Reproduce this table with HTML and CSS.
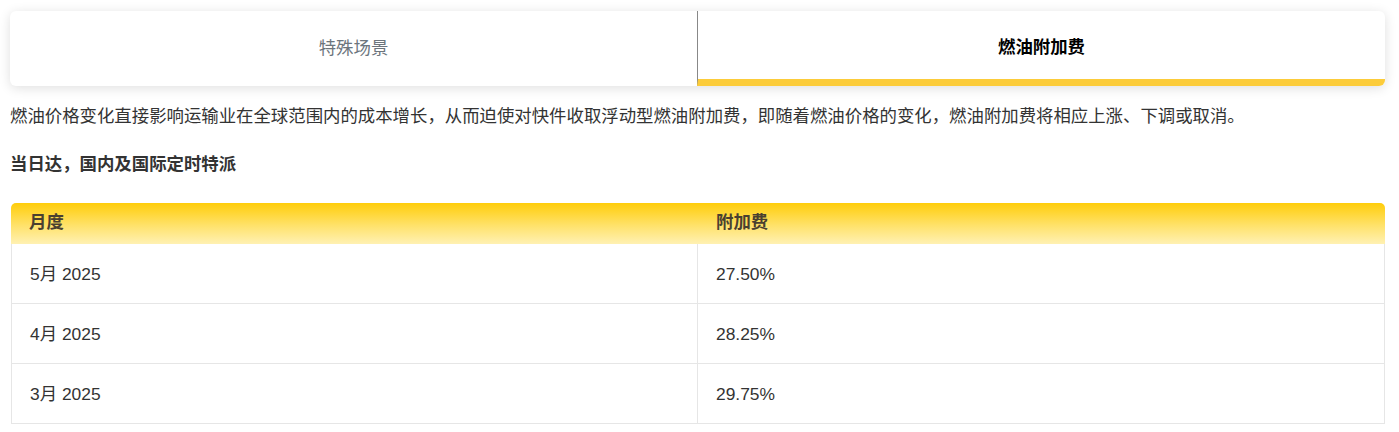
FILE: index.html
```html
<!DOCTYPE html>
<html lang="zh-CN">
<head>
<meta charset="utf-8">
<title>燃油附加费</title>
<link rel="stylesheet" href="styles.css">
</head>
<body>
<div class="page">
  <div class="tabs">
    <div class="tab">特殊场景</div>
    <div class="tab active">燃油附加费</div>
  </div>
  <p class="intro">燃油价格变化直接影响运输业在全球范围内的成本增长，从而迫使对快件收取浮动型燃油附加费，即随着燃油价格的变化，燃油附加费将相应上涨、下调或取消。</p>
  <p class="subtitle">当日达，国内及国际定时特派</p>
  <table class="fuel">
    <thead>
      <tr><th>月度</th><th>附加费</th></tr>
    </thead>
    <tbody>
      <tr><td>5月 2025</td><td>27.50%</td></tr>
      <tr><td>4月 2025</td><td>28.25%</td></tr>
      <tr><td>3月 2025</td><td>29.75%</td></tr>
    </tbody>
  </table>
</div>
</body>
</html>
```
FILE: styles.css
```css
* { box-sizing: border-box; }
html, body { margin: 0; padding: 0; background: #fff; }
body {
  font-family: "Liberation Sans", "Noto Sans CJK SC", sans-serif;
  font-size: 17.4px;
  color: #333;
}
.page {
  padding: 11px 14px 0 10px;
}
.tabs {
  display: flex;
  height: 75px;
  background: #fff;
  border-radius: 6px;
  box-shadow: 0 2px 12px rgba(0,0,0,0.13);
  overflow: hidden;
}
.tab {
  flex: 1;
  display: flex;
  align-items: center;
  justify-content: center;
  color: #6c757d;
  padding-bottom: 4px;
}
.tab.active {
  color: #000;
  font-weight: bold;
  border-left: 1px solid #888;
  border-bottom: 7px solid #fccc3a;
  padding-bottom: 0;
  padding-top: 1px;
}
.intro {
  margin: 18px 0 0 0;
  line-height: 24px;
}
.subtitle {
  margin: 24px 0 0 0;
  line-height: 24px;
  font-weight: bold;
}
.fuel {
  margin: 27px 0 0 1px;
  width: calc(100% - 1px);
  border-collapse: separate;
  border-spacing: 0;
  table-layout: fixed;
  font-size: 17.4px;
}
.fuel th {
  height: 41px;
  line-height: 24px;
  text-align: left;
  padding: 0 18px 3px;
  font-weight: bold;
  color: #4a4030;
  background: linear-gradient(to bottom, #ffcd0a 0%, #ffe26b 55%, #fff1b3 100%);
}
.fuel th:first-child { border-top-left-radius: 5px; }
.fuel th:last-child { border-top-right-radius: 5px; }
.fuel td {
  height: 60px;
  line-height: 24px;
  padding: 0 18px;
  color: #333;
  border-bottom: 1px solid #e6e6e6;
}
.fuel td:first-child { border-left: 1px solid #e6e6e6; border-right: 1px solid #e6e6e6; }
.fuel td:last-child { border-right: 1px solid #e6e6e6; }
```
